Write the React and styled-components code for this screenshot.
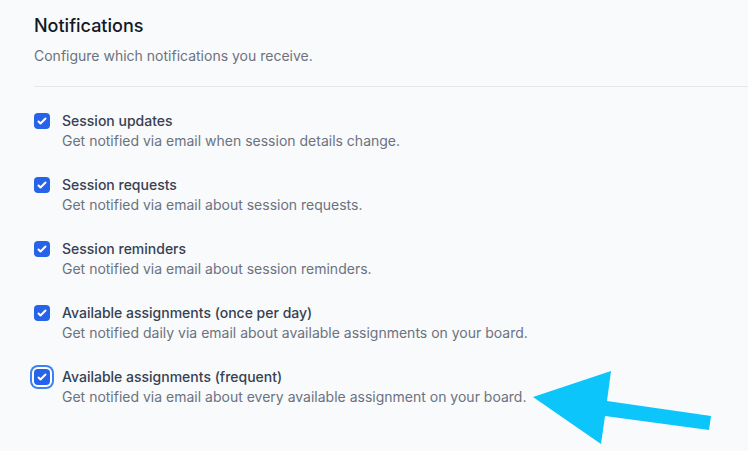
import styled, { createGlobalStyle } from "styled-components";

const GlobalStyle = createGlobalStyle`
  html, body {
    margin: 0;
    padding: 0;
    background: #f9fafb;
  }
  body {
    font-family: Inter, "Noto Sans", sans-serif;
    -webkit-font-smoothing: antialiased;
  }
`;

const Page = styled.div`
  position: relative;
  width: 748px;
  height: 451px;
  overflow: hidden;
  background: #f9fafb;
  padding: 12px 0 0 34px;
  box-sizing: border-box;
`;

const Header = styled.div`
  padding-bottom: 20px;
  border-bottom: 1px solid #e5e7eb;
`;

const Title = styled.h2`
  margin: 0;
  font-size: 18px;
  line-height: 28px;
  font-weight: 500;
  color: #111827;
`;

const Subtitle = styled.p`
  margin: 6px 0 0;
  font-size: 14px;
  line-height: 20px;
  color: #6b7280;
`;

const List = styled.div`
  display: flex;
  flex-direction: column;
  gap: 24px;
  padding-top: 24px;
`;

const Row = styled.label`
  display: flex;
  align-items: flex-start;
  gap: 12px;
`;

const Box = styled.span`
  flex: none;
  width: 16px;
  height: 16px;
  margin-top: 2px;
  border-radius: 4px;
  background: #2563eb;
  display: flex;
  align-items: center;
  justify-content: center;
  box-shadow: ${(p) =>
    p.focused ? "0 0 0 2px #fff, 0 0 0 4px #3b82f6" : "none"};

  svg {
    width: 16px;
    height: 16px;
  }
`;

const Text = styled.div`
  font-size: 14px;
  line-height: 20px;
`;

const Label = styled.div`
  font-weight: 500;
  color: #374151;
`;

const Hint = styled.div`
  color: #6b7280;
`;

const Arrow = styled.svg`
  position: absolute;
  left: 0;
  top: 0;
  pointer-events: none;
`;

const items = [
  {
    label: "Session updates",
    hint: "Get notified via email when session details change.",
  },
  {
    label: "Session requests",
    hint: "Get notified via email about session requests.",
  },
  {
    label: "Session reminders",
    hint: "Get notified via email about session reminders.",
  },
  {
    label: "Available assignments (once per day)",
    hint: "Get notified daily via email about available assignments on your board.",
  },
  {
    label: "Available assignments (frequent)",
    hint: "Get notified via email about every available assignment on your board.",
    focused: true,
  },
];

function Check({ focused }) {
  return (
    <Box focused={focused}>
      <svg viewBox="0 0 16 16" fill="#fff">
        <path d="M12.207 4.793a1 1 0 010 1.414l-5 5a1 1 0 01-1.414 0l-2-2a1 1 0 011.414-1.414L6.5 9.086l4.293-4.293a1 1 0 011.414 0z" />
      </svg>
    </Box>
  );
}

export default function App() {
  return (
    <>
      <GlobalStyle />
      <Page>
        <Header>
          <Title>Notifications</Title>
          <Subtitle>Configure which notifications you receive.</Subtitle>
        </Header>
        <List>
          {items.map((it) => (
            <Row key={it.label}>
              <Check focused={it.focused} />
              <Text>
                <Label>{it.label}</Label>
                <Hint>{it.hint}</Hint>
              </Text>
            </Row>
          ))}
        </List>
        <Arrow width="748" height="451" viewBox="0 0 748 451">
          <polygon
            points="533,397 611,371 607,401 711,416 709,430 605,416 601,444"
            fill="#0bc5fb"
          />
        </Arrow>
      </Page>
    </>
  );
}
